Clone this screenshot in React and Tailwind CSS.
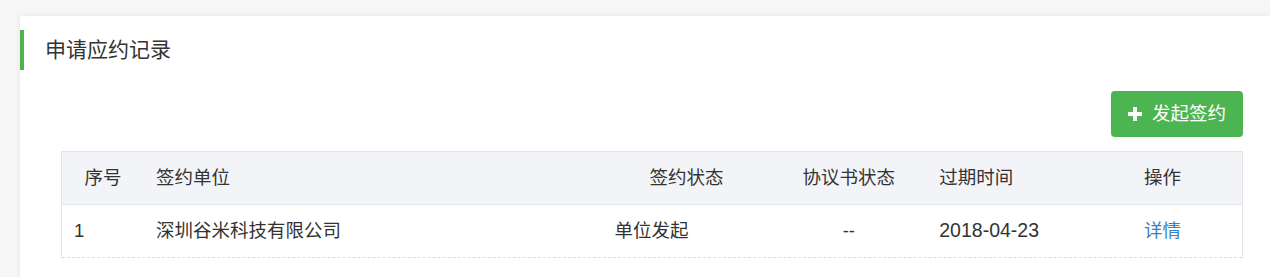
import React from "react";

const cols = [
  { key: "no", label: "序号", w: "w-[82px]", head: "justify-center", cell: "justify-start pl-3" },
  { key: "unit", label: "签约单位", w: "w-[459px]", head: "justify-start pl-3", cell: "justify-start pl-3" },
  { key: "status", label: "签约状态", w: "w-[168px]", head: "justify-center", cell: "justify-start pl-3" },
  { key: "agree", label: "协议书状态", w: "w-[157px]", head: "justify-center", cell: "justify-center" },
  { key: "expire", label: "过期时间", w: "w-[156px]", head: "justify-start pl-3", cell: "justify-start pl-3 text-[19.5px]" },
  { key: "op", label: "操作", w: "w-[159px]", head: "justify-center", cell: "justify-center" },
];

const rows = [
  { no: "1", unit: "深圳谷米科技有限公司", status: "单位发起", agree: "--", expire: "2018-04-23", op: "详情" },
];

export default function App() {
  return (
    <div
      className="h-[277px] w-[1270px] overflow-hidden bg-[#f6f6f6] pt-[16px] text-[#333]"
      style={{ fontFamily: '"Liberation Sans", "Noto Sans CJK SC", sans-serif' }}
    >
      <div className="ml-[20px] h-[300px] bg-white shadow-[0_0_6px_rgba(0,0,0,0.06)]">
        {/* 标题 */}
        <div className="flex h-[54px] items-end">
          <div className="flex h-[40px] items-center border-l-4 border-[#4cb551] pl-[21px] text-[21px]">
            申请应约记录
          </div>
        </div>

        {/* 按钮 */}
        <div className="flex w-[1223px] justify-end pt-[21px]">
          <button className="flex h-[46px] w-[132px] items-center justify-center gap-[10px] rounded-[4px] bg-[#4cb551] text-[18.5px] text-white">
            <svg width="14" height="14" viewBox="0 0 14 14">
              <path d="M5 0h4v5h5v4H9v5H5V9H0V5h5z" fill="#fff" />
            </svg>
            发起签约
          </button>
        </div>

        {/* 表格 */}
        <div className="ml-[41px] mt-[14px] w-[1182px] border border-b-0 border-[#e4e5ea]">
          <div className="flex h-[53px] border-b border-[#e4e5ea] bg-[#f3f4f8] text-[18.5px]">
            {cols.map((c) => (
              <div key={c.key} className={`flex items-center ${c.w} ${c.head}`}>
                {c.label}
              </div>
            ))}
          </div>
          {rows.map((r) => (
            <div key={r.no} className="flex h-[53px] border-b border-dashed border-[#dcdde2] text-[18.5px]">
              {cols.map((c) => (
                <div
                  key={c.key}
                  className={`flex items-center ${c.w} ${c.cell} ${c.key === "op" ? "text-[#3a7fc1]" : ""}`}
                >
                  {r[c.key]}
                </div>
              ))}
            </div>
          ))}
        </div>
      </div>
    </div>
  );
}
